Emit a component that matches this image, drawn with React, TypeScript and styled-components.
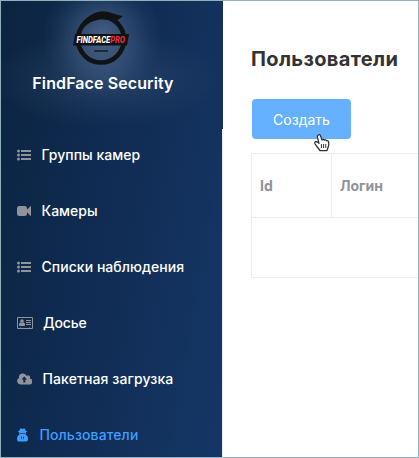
import React from "react";
import styled, { createGlobalStyle } from "styled-components";

const GlobalStyle = createGlobalStyle`
  * { box-sizing: border-box; }
  body { margin: 0; overflow: hidden; background: #fff; }
`;

const Frame = styled.div`
  display: flex;
  width: 419px;
  height: 458px;
  border: 1px solid #8fb1bb;
  overflow: hidden;
  background: #fff;
  font-family: Inter, "Liberation Sans", sans-serif;
`;

const Sidebar = styled.aside`
  flex: 0 0 222px;
  height: 456px;
  background: linear-gradient(100deg, #0c2440 0%, #102c54 48%, #153766 100%);
`;

const Brand = styled.div`
  display: flex;
  flex-direction: column;
  align-items: center;
  height: 128px;
  padding: 9px 18px 0 0;
  background:
    radial-gradient(circle 60px at 101px 36px, rgba(145, 165, 200, 0.44), rgba(120, 145, 185, 0.24) 50%, rgba(110, 140, 180, 0.07) 80%, rgba(110, 140, 180, 0)),
    radial-gradient(ellipse 115px 48px at 104px 78px, rgba(120, 145, 175, 0.22), rgba(120, 145, 175, 0.08) 60%, rgba(120, 145, 175, 0));
`;

const BrandName = styled.div`
  margin-top: 7px;
  color: #fff;
  font-size: 16px;
  font-weight: 600;
  letter-spacing: 0.1px;
  line-height: 20px;
  white-space: nowrap;
`;

const Menu = styled.nav`
  display: flex;
  flex-direction: column;
  height: 328px;
  border-right: 1px solid #e6ebf5;
  overflow: hidden;
`;

const MenuItem = styled.a<{ $active?: boolean; $gap: number; $spacing: number }>`
  display: flex;
  flex: 0 0 56px;
  align-items: center;
  gap: ${(p) => p.$gap}px;
  padding: 0 0 4px 16px;
  color: ${(p) => (p.$active ? "#409eff" : "#fff")};
  font-size: 14px;
  font-weight: ${(p) => (p.$active ? 500 : 550)};
  letter-spacing: ${(p) => p.$spacing}px;
  line-height: 20px;
  white-space: nowrap;
  svg { flex: none; color: ${(p) => (p.$active ? "#409eff" : "#909399")}; }
`;

const Main = styled.main`
  flex: 1;
  min-width: 0;
  padding: 44px 0 0 28px;
`;

const Heading = styled.h1`
  margin: 0;
  color: #333;
  font-size: 20px;
  font-weight: 700;
  letter-spacing: 0.35px;
  line-height: 28px;
  white-space: nowrap;
`;

const CreateButton = styled.button`
  display: block;
  width: 99px;
  height: 40px;
  margin: 26px 0 14px 1px;
  padding: 0;
  border: 0;
  border-radius: 4px;
  background: #66b1ff;
  color: #fff;
  font: 400 14px Inter, sans-serif;
  cursor: pointer;
`;

const Table = styled.div`
  width: 400px;
  border: 1px solid #ebeef5;
`;

const TableHead = styled.div`
  display: flex;
  height: 64px;
  border-bottom: 1px solid #ebeef5;
`;

const HeadCell = styled.div<{ $width: number }>`
  width: ${(p) => p.$width}px;
  padding: 0 8px;
  border-right: 1px solid #ebeef5;
  color: #909399;
  font: 700 14px/64px Inter, sans-serif;
`;

const EmptyRow = styled.div`
  height: 59px;
`;

const Pointer = styled.svg`
  position: absolute;
  left: 313px;
  top: 133px;
`;

const LogoMark = styled.svg`
  margin-right: 4px;
`;

const Logo = () => (
  <LogoMark width="58" height="56" viewBox="72 10 58 56">
    <circle cx="101" cy="39.5" r="23" fill="none" stroke="#111214" strokeWidth="4.6" />
    <path d="M80 26C85 17 94 12 101 11.4C109 11 115 15 123 16L117 20.5L121 25C108 17.5 94 17 83 28Z" fill="#111214" />
    <path d="M75 34H129L127 45.5H73Z" fill="#111214" />
    <path d="M94 51H108" stroke="#20242d" strokeWidth="1.8" />
    <text
      x="76.5"
      y="42.7"
      fill="#fff"
      fontFamily="Roboto, sans-serif"
      fontSize="8.4"
      fontStyle="italic"
      fontWeight="800"
      textLength="48.5"
      lengthAdjust="spacingAndGlyphs"
    >
      FINDFACE<tspan fill="#e52f3f">PRO</tspan>
    </text>
  </LogoMark>
);

const ListIcon = () => (
  <svg width="14" height="12" viewBox="0 0 14 12" fill="currentColor">
    <circle cx="1.5" cy="2" r="1.5" /><circle cx="1.5" cy="6" r="1.5" /><circle cx="1.5" cy="10" r="1.5" />
    <path d="M4 1H14V3H4ZM4 5H14V7H4ZM4 9H14V11H4Z" />
  </svg>
);

const CameraIcon = () => (
  <svg width="14" height="12" viewBox="0 0 14 12" fill="currentColor">
    <path d="M2.3 1H7.7Q10 1 10 3.3V4.7L13.3 1.3Q14 .8 14 1.6V10.4Q14 11.2 13.3 10.7L10 7.3V8.7Q10 11 7.7 11H2.3Q0 11 0 8.7V3.3Q0 1 2.3 1Z" />
  </svg>
);

const CardIcon = () => (
  <svg width="16" height="12" viewBox="0 0 16 12" fill="currentColor">
    <path fillRule="evenodd" d="M1 0H15Q16 0 16 1V11Q16 12 15 12H1Q0 12 0 11V1Q0 0 1 0ZM1 1V11H3V10.4H4V11H12V10.4H13V11H15V1Z" />
    <circle cx="5" cy="4" r="1.8" />
    <path d="M3.5 5.3Q5 6.5 6.5 5.3Q8 5.5 8 7.8Q8 9 7.2 9H2.8Q2 9 2 7.8Q2 5.5 3.5 5.3Z" />
    <path d="M9 3H14V4H9ZM9 5H14V6H9ZM9 7H14V8H9Z" />
  </svg>
);

const CloudIcon = () => (
  <svg width="15" height="12" viewBox="0 0 15 12" fill="currentColor">
    <path fillRule="evenodd" d="M3.5 11.5A3.5 3.5 0 0 1 2 4.9A4 4 0 0 1 9.7 3A2 2 0 0 1 12.8 5.5A3 3 0 0 1 12 11.5ZM7.3 3.5L4.5 6.5H6.3V9.5H8.3V6.5H10Z" />
  </svg>
);

const AgentIcon = () => (
  <svg width="11" height="14" viewBox="0 0 11 14" fill="currentColor">
    <path d="M3 .7Q3.5.2 4.2.6Q5.5 1.3 6.8.6Q7.5.2 8 .7L8.6 2.7Q10.2 3.1 10.2 3.5Q10.2 4 8.8 4.3V5.4Q9 6.2 8.3 7.1L10 7.5Q11 8.8 11 11.3Q11 13.5 9 13.5H2Q0 13.5 0 11.3Q0 8.8 1 7.5L2.7 7.1Q2 6.2 2.2 5.4V4.3Q.8 4 .8 3.5Q.8 3.1 2.4 2.7Z" />
    <path d="M3 5.1H5L5.5 4.9L6 5.1H8L7.6 5.8H6.3L5.5 5.4L4.7 5.8H3.4ZM3.9 8.2L5 9L4.6 12ZM7.1 8.2L6 9L6.4 12Z" fill="#0e2748" />
  </svg>
);

const HandPointer = () => (
  <Pointer width="18" height="20" viewBox="0 0 18 20">
    <path d="M5 2.2Q6.6.9 7.5 2.8L9 7Q10.4 5.8 11.3 7.2Q12.7 6.2 13.6 7.8Q15.6 7.3 15.7 9.5V12.5L14 17.5H7L3.5 13L2 10.8Q1.2 8.8 3 8.6Q4.6 8.6 6 10.5L4.4 4Q4.2 2.8 5 2.2Z" fill="#fff" stroke="#303134" strokeWidth="1.25" strokeLinejoin="round" />
    <path d="M8.4 11V15M10.6 11V15M12.8 11V15" stroke="#303134" />
  </Pointer>
);

const items = [
  { label: "Группы камер", icon: <ListIcon />, gap: 10.5, spacing: 0.02 },
  { label: "Камеры", icon: <CameraIcon />, gap: 10.5, spacing: 0 },
  { label: "Списки наблюдения", icon: <ListIcon />, gap: 10.5, spacing: 0.05 },
  { label: "Досье", icon: <CardIcon />, gap: 10, spacing: -0.2 },
  { label: "Пакетная загрузка", icon: <CloudIcon />, gap: 10.5, spacing: 0.1 },
  { label: "Пользователи", icon: <AgentIcon />, gap: 11.5, spacing: 0.1, active: true },
];

export default function App() {
  return (
    <>
      <GlobalStyle />
      <Frame>
        <Sidebar>
          <Brand>
            <Logo />
            <BrandName>FindFace Security</BrandName>
          </Brand>
          <Menu>
            {items.map((item) => (
              <MenuItem key={item.label} $gap={item.gap} $spacing={item.spacing} $active={item.active}>
                {item.icon}
                <span>{item.label}</span>
              </MenuItem>
            ))}
          </Menu>
        </Sidebar>
        <Main>
          <Heading>Пользователи</Heading>
          <CreateButton>Создать</CreateButton>
          <Table>
            <TableHead>
              <HeadCell $width={80}>Id</HeadCell>
              <HeadCell $width={240}>Логин</HeadCell>
            </TableHead>
            <EmptyRow />
          </Table>
        </Main>
        <HandPointer />
      </Frame>
    </>
  );
}
